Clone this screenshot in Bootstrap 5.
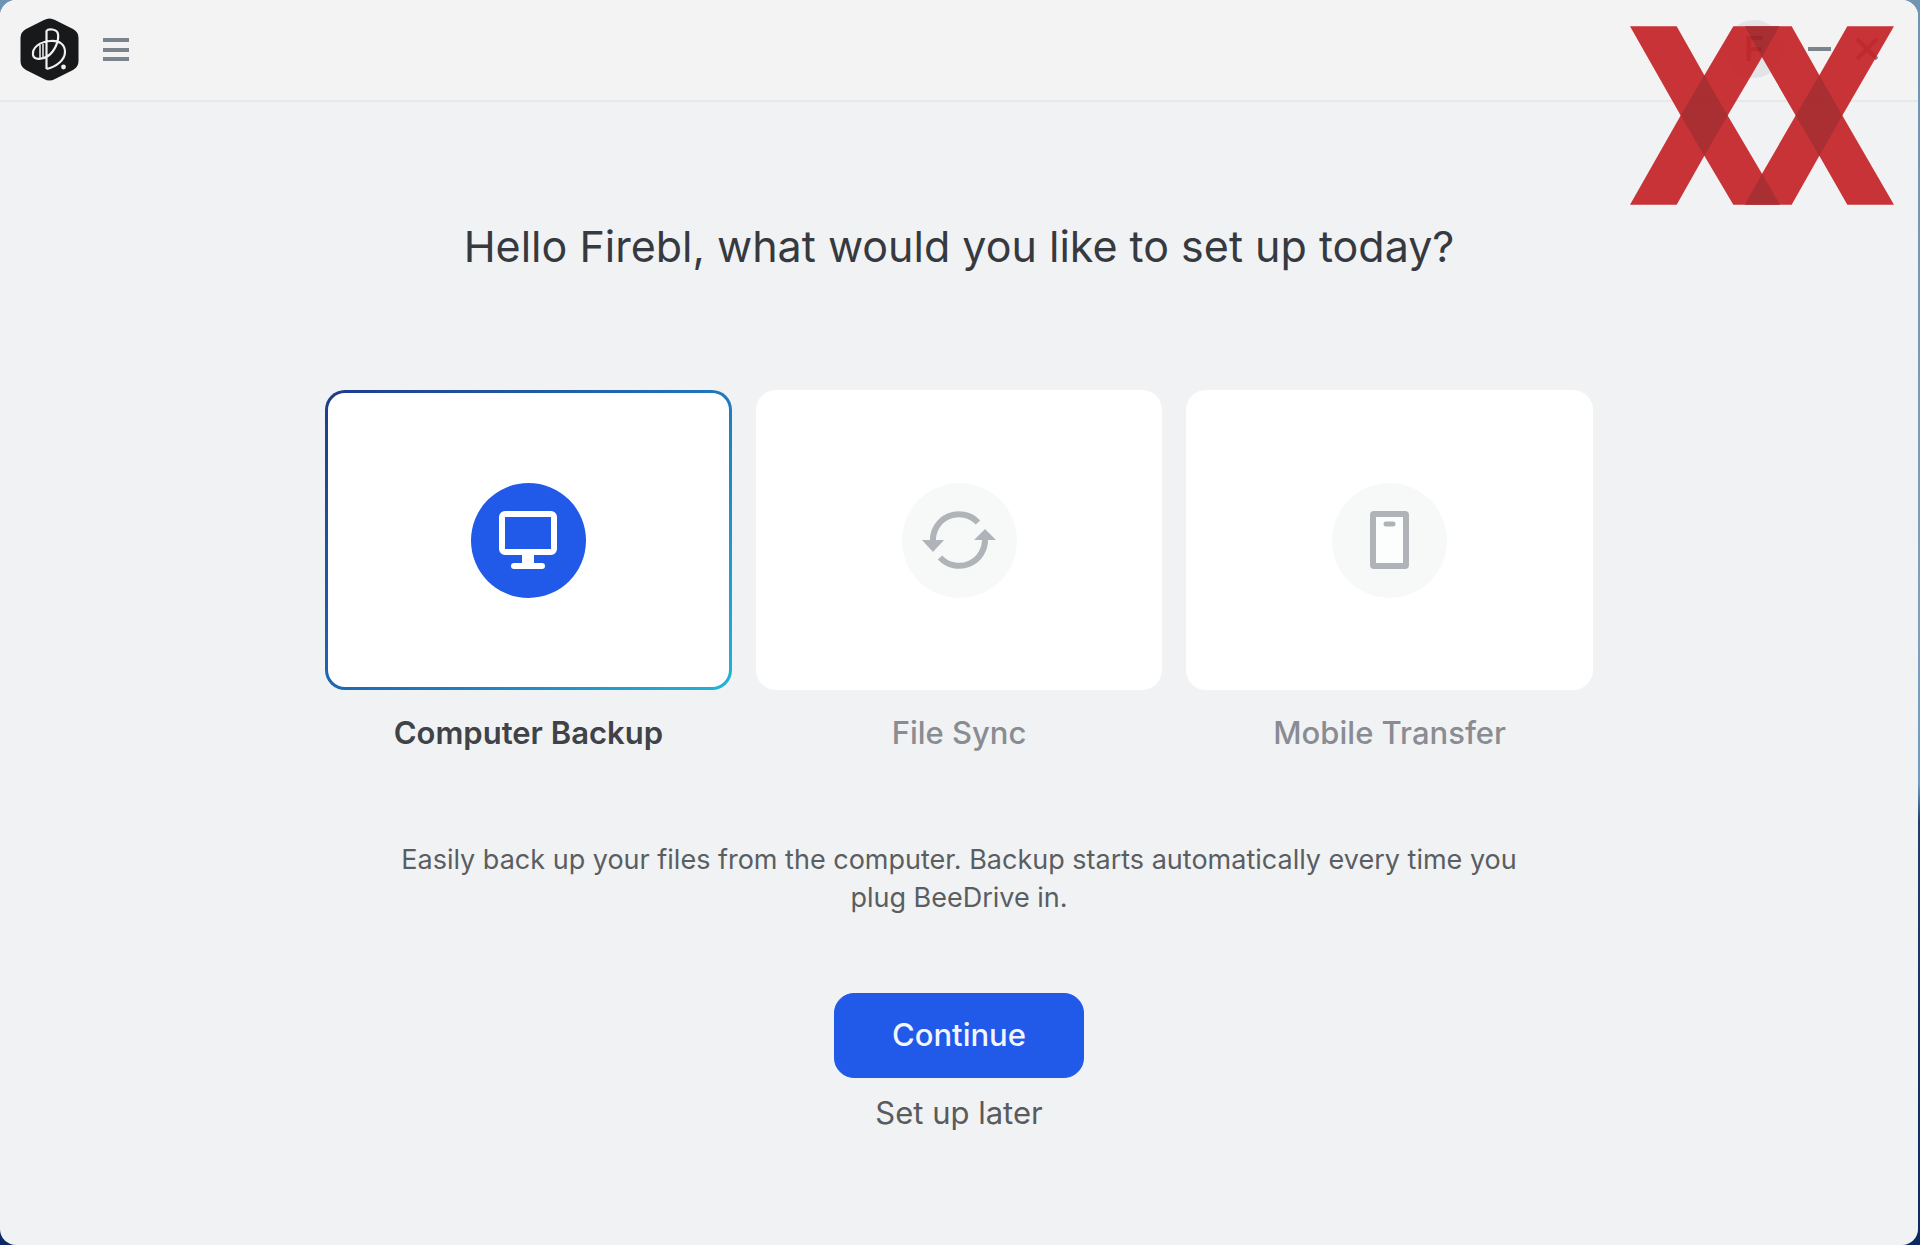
<!DOCTYPE html>
<html lang="en">
<head>
<meta charset="utf-8">
<meta name="viewport" content="width=device-width, initial-scale=1">
<title>BeeDrive</title>
<link href="https://cdn.jsdelivr.net/npm/bootstrap@5.3.0/dist/css/bootstrap.min.css" rel="stylesheet">
<style>
  body { font-family: Inter, "Liberation Sans", sans-serif; background: linear-gradient(#6f93b3, #7fa0bd 50%, #6c9bc4 63%, #1d3f70 66%, #0b2a63) #0b3a8a; }
  .app-window { margin-right: 2px; background: #f1f2f3; border-radius: 16px; overflow: hidden; color: #393d42; }
  .app-bar { height: 102px; padding: 0 40px 2px 20px; background: #f3f3f4; border-bottom: 2px solid #e6e8ea; }
  .bar-btn { padding: 0; border: 0; background: none; line-height: 0; color: #7b838c; }
  .window-btns { gap: 25px; }
  .avatar-btn { width: 58px; height: 58px; background: #e2e4e7; color: #6a737d; font-size: 34px; font-weight: 600; line-height: 58px; }
  .setup-main { padding: 118px 24px 80px; }
  .setup-title { font-size: 43px; line-height: 52px; font-weight: 400; margin-bottom: 118px; color: #363a40; }
  .choices { width: 100%; max-width: 1268px; gap: 24px; margin-bottom: 88px; }
  .choice { flex: 1 1 0; cursor: pointer; }
  .choice-tile { height: 300px; border: 3px solid transparent; border-radius: 20px; background: #fff; margin-bottom: 23px; }
  .choice-icon { width: 115px; height: 115px; background: #f7f9f9; color: #b0b3b8; }
  .choice-name { font-size: 31px; line-height: 40px; font-weight: 500; color: #898c93; }
  .btn-check:checked + .choice .choice-tile { background: linear-gradient(#fff, #fff) padding-box, linear-gradient(135deg, #203a8c, #1f6fb8 50%, #22b4d8) border-box; }
  .btn-check:checked + .choice .choice-icon { background: #2159e8; color: #fff; }
  .btn-check:checked + .choice .choice-name { color: #404247; font-weight: 600; }
  .setup-text { max-width: 1150px; font-size: 27px; line-height: 38px; margin-bottom: 76px; color: #5a5e62; }
  .continue-btn { width: 250px; height: 85px; border-radius: 20px; font-size: 31px; font-weight: 500; color: #f2f5fe; --bs-btn-bg: #2159e8; --bs-btn-border-color: #2159e8; margin-bottom: 15px; }
  .later-link { font-size: 31px; line-height: 40px; color: #595b5f; }
  .site-mark { top: 26px; right: 24px; pointer-events: none; }
</style>
</head>
<body>
<div class="app-window position-relative min-vh-100 d-flex flex-column">
  <header class="app-bar d-flex align-items-center">
    <svg width="59" height="63" viewBox="0 0 59 63" role="img" aria-label="BeeDrive">
      <path d="M24 2Q29.500-1 35 2L53 11Q58.500 14 58.500 20V43Q58.500 49 53 52L35 61Q29.500 64 24 61L6 52Q.5 49 .5 43V20Q.5 14 6 11Z" fill="#18191a"/>
      <g fill="none" stroke="#f1f1f1" stroke-width="2.200" stroke-linejoin="round">
        <path d="M26.500 51V13C28 10.500 37 10.500 38 16C39 23 35 33 28 38C22 42 14 42 13 37C12 30 19 24 30 23C40 22 45 27 45 34C45 42 36 49 26.500 51"/>
        <path d="M20 27V40M23 26V40" stroke-width="1.500"/>
      </g>
      <circle cx="43.500" cy="49" r="2.400" fill="#f1f1f1"/>
    </svg>
    <button type="button" class="bar-btn ms-4" aria-label="Menu">
      <svg width="26" height="27" viewBox="0 0 26 27" stroke="currentColor" stroke-width="4"><path d="M0 4H26M0 14H26M0 23H26"/></svg>
    </button>
    <div class="window-btns ms-auto d-flex align-items-center">
      <button type="button" class="bar-btn avatar-btn rounded-circle text-center" aria-label="Account">F</button>
      <button type="button" class="bar-btn" aria-label="Minimize">
        <svg width="23" height="22" viewBox="0 0 23 22" stroke="currentColor" stroke-width="4"><path d="M0 11H23"/></svg>
      </button>
      <button type="button" class="bar-btn" aria-label="Close">
        <svg width="22" height="22" viewBox="0 0 22 22" stroke="currentColor" stroke-width="4"><path d="M1 1L21 21M21 1L1 21"/></svg>
      </button>
    </div>
  </header>

  <main class="setup-main d-flex flex-column align-items-center text-center">
    <h1 class="setup-title">Hello Firebl, what would you like to set up today?</h1>
    <div class="choices d-flex" role="radiogroup" aria-label="Setup type">
      <input class="btn-check" type="radio" name="setup" id="backup" checked>
      <label class="choice" for="backup">
        <span class="choice-tile d-flex align-items-center justify-content-center">
          <span class="choice-icon rounded-circle d-flex align-items-center justify-content-center">
            <svg width="58" height="58" viewBox="0 0 58 58" fill="none" stroke="currentColor" stroke-width="6"><rect x="3" y="3" width="52" height="38" rx="3"/><path d="M15 55H43" stroke-linecap="round"/><path d="M29 41V55" stroke-width="12"/></svg>
          </span>
        </span>
        <span class="choice-name d-block">Computer Backup</span>
      </label>
      <input class="btn-check" type="radio" name="setup" id="sync">
      <label class="choice" for="sync">
        <span class="choice-tile d-flex align-items-center justify-content-center">
          <span class="choice-icon rounded-circle d-flex align-items-center justify-content-center">
            <svg width="74" height="58" viewBox="0 0 74 58" fill="none" stroke="currentColor" stroke-width="6"><path d="M56 11.500A26 26 0 0 0 11 31M18 46.500A26 26 0 0 0 63 27"/><path d="M0 29H22L11 41ZM52 29H74L63 18Z" fill="currentColor" stroke="none"/></svg>
          </span>
        </span>
        <span class="choice-name d-block">File Sync</span>
      </label>
      <input class="btn-check" type="radio" name="setup" id="mobile">
      <label class="choice" for="mobile">
        <span class="choice-tile d-flex align-items-center justify-content-center">
          <span class="choice-icon rounded-circle d-flex align-items-center justify-content-center">
            <svg width="39" height="58" viewBox="0 0 39 58" fill="none" stroke="currentColor" stroke-width="6"><rect x="3" y="3" width="33" height="52" rx="1" fill="#fcfdfd"/><path d="M16 13H23" stroke-linecap="round" stroke-width="5"/></svg>
          </span>
        </span>
        <span class="choice-name d-block">Mobile Transfer</span>
      </label>
    </div>
    <p class="setup-text">Easily back up your files from the computer. Backup starts automatically every time you plug BeeDrive in.</p>
    <button type="button" class="btn btn-primary continue-btn">Continue</button>
    <a href="#" class="later-link text-decoration-none">Set up later</a>
  </main>

  <svg class="site-mark position-absolute" width="264" height="179" viewBox="0 0 792 536" opacity=".92" aria-hidden="true">
    <path fill="#c52328" d="M0 0H140L223 147L310 0H485L568 147L652 0H792L637 268L792 536H652L568 389L485 536H310L223 389L140 536H0L152 268ZM396 93L293 268L396 443L497 268Z"/>
    <path fill="#a31f23" d="M223 147L293 268L223 389L152 268ZM568 147L637 268L568 389L497 268ZM345 0H448L396 93ZM345 536H450L396 443Z"/>
  </svg>
</div>
<script src="https://cdn.jsdelivr.net/npm/bootstrap@5.3.0/dist/js/bootstrap.bundle.min.js"></script>
</body>
</html>
